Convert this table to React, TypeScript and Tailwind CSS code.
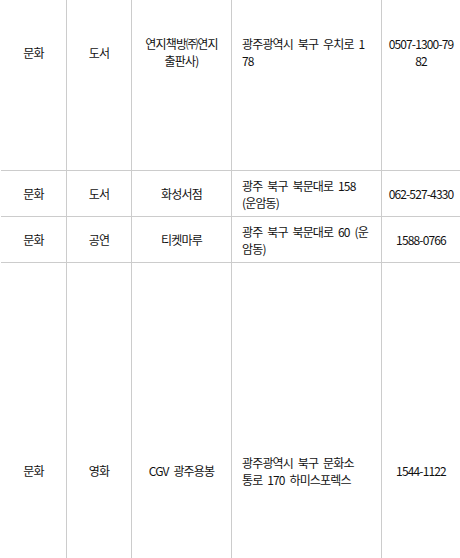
import React from 'react';

type Row = {
  category: string;
  kind: string;
  name: React.ReactNode;
  address: React.ReactNode;
  phone: React.ReactNode;
  height: string;
};

const ROWS: Row[] = [
  {
    category: '문화',
    kind: '도서',
    name: (
      <>
        연지책방㈜연지
        <br />
        출판사)
      </>
    ),
    address: (
      <>
        광주광역시 북구 우치로 1
        <br />
        78
      </>
    ),
    phone: (
      <>
        0507-1300-79
        <br />
        82
      </>
    ),
    height: 'h-[237px]',
  },
  {
    category: '문화',
    kind: '도서',
    name: '화성서점',
    address: (
      <>
        광주 북구 북문대로 158
        <br />
        (운암동)
      </>
    ),
    phone: '062-527-4330',
    height: 'h-[46px]',
  },
  {
    category: '문화',
    kind: '공연',
    name: '티켓마루',
    address: (
      <>
        광주 북구 북문대로 60 (운
        <br />
        암동)
      </>
    ),
    phone: '1588-0766',
    height: 'h-[46px]',
  },
  {
    category: '문화',
    kind: '영화',
    name: 'CGV 광주용봉',
    address: (
      <>
        광주광역시 북구 문화소
        <br />
        통로 170 하미스포렉스
      </>
    ),
    phone: '1544-1122',
    height: 'h-[416px]',
  },
];

const cell = 'border-b border-r border-[#cccccc] align-middle whitespace-nowrap';

export default function App() {
  return (
    <div className="h-[558px] w-[460px] overflow-hidden bg-white pl-px">
      <table
        className="-mt-[66px] w-[460px] table-fixed border-separate border-spacing-0 text-[12px] leading-[17px] tracking-[-0.85px] text-[#111111]"
        style={{ fontFamily: '"Noto Sans CJK KR", "Noto Sans", sans-serif', wordSpacing: '3px' }}
      >
        <colgroup>
          <col className="w-[66px]" />
          <col className="w-[65px]" />
          <col className="w-[100px]" />
          <col className="w-[150px]" />
          <col className="w-[79px]" />
        </colgroup>
        <tbody>
          {ROWS.map((row, i) => (
            <tr key={i} className={row.height}>
              <td className={`${cell} text-center`}>{row.category}</td>
              <td className={`${cell} text-center`}>{row.kind}</td>
              <td className={`${cell} px-[5px] text-center`}>{row.name}</td>
              <td className={`${cell} px-[10px] text-left`}>{row.address}</td>
              <td className={`${cell} px-[4px] text-center`}>{row.phone}</td>
            </tr>
          ))}
        </tbody>
      </table>
    </div>
  );
}
